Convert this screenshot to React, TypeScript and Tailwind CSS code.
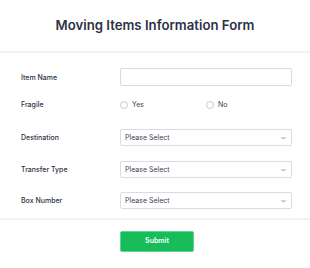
import React from "react";

const font = { fontFamily: "Inter, 'Noto Sans', sans-serif" };

function Chevron() {
  return (
    <svg width="5" height="3" viewBox="0 0 5 3" className="absolute right-[5px] top-1/2 -translate-y-1/2">
      <path d="M0.5 0.5 L2.5 2.5 L4.5 0.5" fill="none" stroke="#7a8194" strokeWidth="0.9" />
    </svg>
  );
}

function SelectBox() {
  return (
    <div className="relative w-[172px] shrink-0 h-full rounded-[2px] border border-[#d8dbe2] bg-white flex items-center pl-[4px] text-[7px] leading-none text-[#3b4253]">
      Please Select
      <Chevron />
    </div>
  );
}

function Label({ children }: { children: React.ReactNode }) {
  return (
    <div className="w-[120px] shrink-0 pl-[21px] text-[7px] font-medium text-[#2c3345] leading-none">{children}</div>
  );
}

export default function App() {
  return (
    <div className="w-[310px] h-[268px] bg-white" style={font}>
      <div className="h-[51px] flex items-center justify-center">
        <h1 className="text-[13.2px] font-semibold text-[#2c3345]">Moving Items Information Form</h1>
      </div>
      <div className="h-[2px] bg-[#f3f3f6]" />
      <div className="mt-[15px] h-[18px] flex items-center">
        <Label>Item Name</Label>
        <div className="w-[172px] shrink-0 h-full rounded-[2px] border border-[#d8dbe2] bg-white" />
      </div>
      <div className="mt-[14px] h-[9px] flex items-center">
        <Label>Fragile</Label>
        <div className="flex items-center w-[86px] shrink-0">
          <span className="w-[8px] h-[8px] rounded-full border border-[#c7ccd6] bg-white" />
          <span className="ml-[4px] text-[7px] leading-none text-[#3b4253]">Yes</span>
        </div>
        <div className="flex items-center">
          <span className="w-[8px] h-[8px] rounded-full border border-[#c7ccd6] bg-white" />
          <span className="ml-[4px] text-[7px] leading-none text-[#3b4253]">No</span>
        </div>
      </div>
      <div className="mt-[20px] h-[17px] flex items-center">
        <Label>Destination</Label>
        <SelectBox />
      </div>
      <div className="mt-[15px] h-[17px] flex items-center">
        <Label>Transfer Type</Label>
        <SelectBox />
      </div>
      <div className="mt-[14px] h-[17px] flex items-center">
        <Label>Box Number</Label>
        <SelectBox />
      </div>
      <div className="mt-[9px] h-[2px] bg-[#f3f3f6]" />
      <div className="mt-[11px] flex pl-[120px]">
        <button className="w-[74px] h-[21px] rounded-[2px] bg-[#18bd5b] border border-[#5fd68f] text-white text-[7px] font-semibold flex items-center justify-center">
          Submit
        </button>
      </div>
    </div>
  );
}
